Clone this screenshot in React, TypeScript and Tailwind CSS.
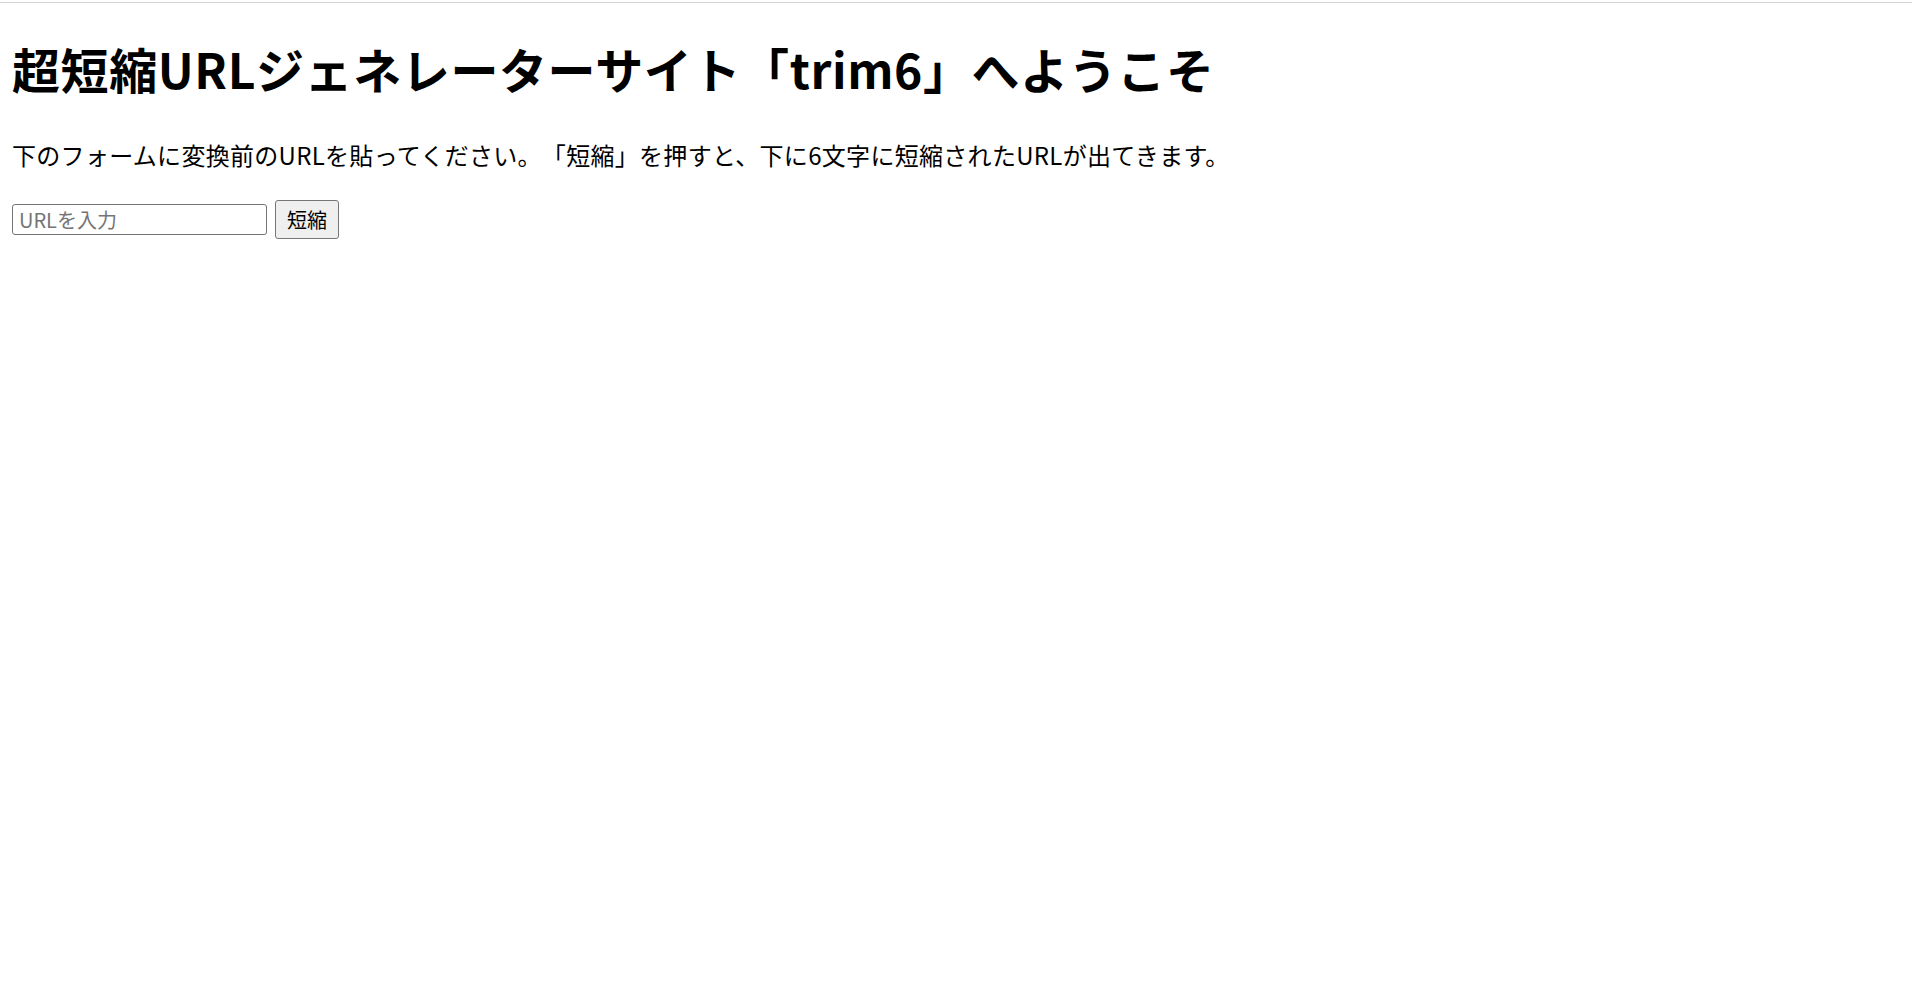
import React, { useState } from 'react'

const font = { fontFamily: '"Noto Sans CJK JP", "Noto Sans", sans-serif' }

const App = () => {
  const [url, setUrl] = useState("")

  return (
    <div className="min-h-screen bg-white text-black [text-spacing-trim:space-all]" style={font}>
      <div className="mt-[2px] h-px bg-[#d3d3d3]" />
      <main className="px-3">
        <h1 className="mt-[29px] text-[48px] font-bold leading-[72px] tracking-[0.6px]">
          超短縮URLジェネレーターサイト「trim6」へようこそ
        </h1>
        <p className="mt-[33px] text-[24px] leading-[36px] tracking-[0.3px]">
          下のフォームに変換前のURLを貼ってください。「短縮」を押すと、下に6文字に短縮されたURLが出てきます。
        </p>
        <form
          className="mt-[27px] flex items-center gap-2"
          onSubmit={(e) => e.preventDefault()}
        >
          <input
            type="text"
            value={url}
            onChange={(e) => setUrl(e.target.value)}
            placeholder="URLを入力"
            className="h-[31px] w-[255px] rounded-[3px] border border-[#767676] px-[6px] text-[20px] placeholder:text-[#757575] focus:outline-none"
          />
          <button
            type="submit"
            className="h-[39px] w-[64px] rounded-[3px] border border-[#767676] bg-[#efefef] text-[20px]"
          >
            短縮
          </button>
        </form>
      </main>
    </div>
  )
}

export default App
